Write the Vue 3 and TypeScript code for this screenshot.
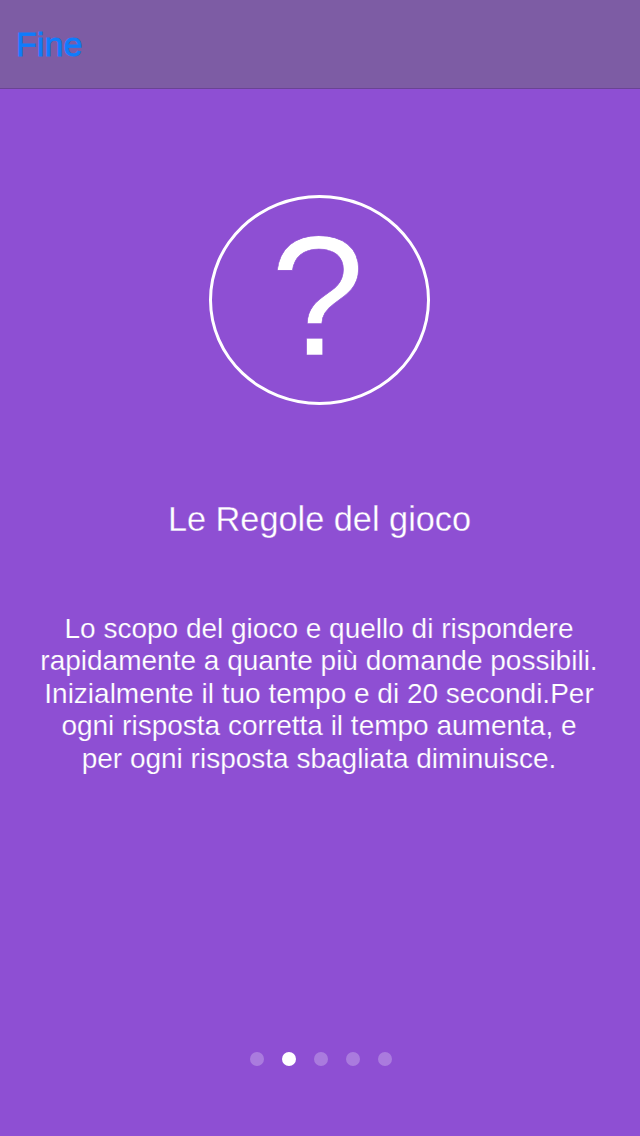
<template>
  <div class="screen">
    <header class="nav-bar">
      <span class="done">Fine</span>
    </header>
    <main class="page">
      <div class="icon-circle"><span class="mark">?</span></div>
      <h1 class="title">Le Regole del gioco</h1>
      <p class="body-text">
        <span v-for="line in lines" :key="line" class="line">{{ line }}</span>
      </p>
    </main>
    <div class="dots">
      <span v-for="n in 5" :key="n" class="dot" :class="{ active: n === 2 }"></span>
    </div>
  </div>
</template>

<script setup lang="ts">
const lines: string[] = [
  'Lo scopo del gioco e quello di rispondere',
  'rapidamente a quante più domande possibili.',
  'Inizialmente il tuo tempo e di 20 secondi.Per',
  'ogni risposta corretta il tempo aumenta, e',
  'per ogni risposta sbagliata diminuisce.'
]
</script>

<style>
html, body { margin: 0; background: #8e4fd3; }
</style>

<style scoped>
.screen {
  width: 640px;
  height: 1136px;
  display: flex;
  flex-direction: column;
  background: #8e4fd3;
  color: #fff;
  font-family: "Liberation Sans", Arial, sans-serif;
  overflow: hidden;
}
.nav-bar {
  height: 89px;
  flex-shrink: 0;
  box-sizing: border-box;
  padding: 27px 0 0 16px;
  background: #7d5ca4;
  box-shadow: inset 0 -1px 0 #6a4394;
}
.done {
  display: block;
  font-size: 34px;
  line-height: 34px;
  letter-spacing: 0.1px;
  color: #0f7cfc;
  -webkit-text-stroke: 0.8px #0f7cfc;
}
.page {
  flex: 1;
  display: flex;
  flex-direction: column;
  align-items: center;
}
.icon-circle {
  margin: 106px 1px 0 0;
  width: 221px;
  height: 210px;
  box-sizing: border-box;
  border: 3px solid #fff;
  border-radius: 50%;
  display: flex;
  align-items: center;
  justify-content: center;
}
.mark {
  font-size: 170px;
  line-height: 170px;
  margin: 0 4px 9px 0;
  -webkit-text-stroke: 0.6px #8e4fd3;
}
.title {
  margin: 95px 0 0 -1px;
  font-size: 34.3px;
  line-height: 38px;
  font-weight: 400;
  -webkit-text-stroke: 0.3px #8e4fd3;
}
.body-text {
  margin: 75px 0 0 -2px;
  font-size: 28px;
  line-height: 32.4px;
  text-align: center;
  -webkit-text-stroke: 0.2px #8e4fd3;
}
.line {
  display: block;
  white-space: nowrap;
}
.dots {
  display: flex;
  justify-content: center;
  gap: 18px;
  padding: 0 0 70px 2px;
}
.dot {
  width: 14px;
  height: 14px;
  border-radius: 50%;
  background: rgba(255, 255, 255, 0.25);
}
.dot.active {
  background: #fff;
}
</style>
